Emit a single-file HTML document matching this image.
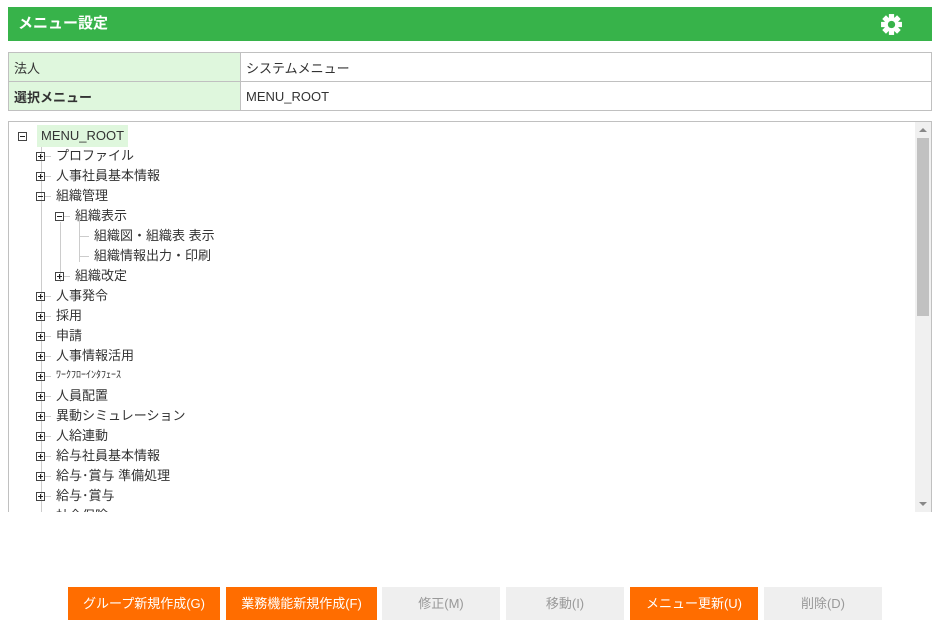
<!DOCTYPE html><html><head><meta charset="utf-8"><style>
body{margin:0;width:937px;height:630px;background:#fff;font-family:"Liberation Sans","Noto Sans CJK JP",sans-serif;position:relative;overflow:hidden;color:#333}
.hd{position:absolute;left:8px;top:7px;width:924px;height:34px;background:#37b34a;color:#fff;font-weight:bold;font-size:15px;line-height:34px}
.hd span{position:absolute;left:10px}
table{position:absolute;left:8px;top:52px;width:924px;border-collapse:collapse;font-size:13px}
td{border:1px solid #c0c0c0;height:28px;padding:0 5px}
td.l{background:#dff7dd;width:221px}
.tree{position:absolute;left:8px;top:121px;width:922px;height:390px;border:1px solid #c0c0c0;border-bottom:none;overflow:hidden;font-size:13px}
.sb{position:absolute;right:0;top:0;width:16px;height:390px;background:#f0f0f0}
.th{position:absolute;left:2px;top:16px;width:12px;height:178px;background:#c1c1c1}
.r{position:absolute;height:20px;line-height:20px;white-space:nowrap}
.bx{position:absolute;width:7px;height:7px;border:1px solid #444;top:6px;font-size:0}
.bx:before{content:"";position:absolute;left:1px;top:3px;width:5px;height:1px;background:#222}
.p:after{content:"";position:absolute;left:3px;top:1px;width:1px;height:5px;background:#222}
.vl{position:absolute;width:1px;background:#ccc}
.hl{position:absolute;height:1px;background:#ccc;top:10px}
.btn{position:absolute;top:587px;height:33px;line-height:33px;text-align:center;font-size:13px;color:#fff;background:#ff6d00}
.g{background:#efefef;color:#999}
</style></head><body>
<div class="hd"><span>メニュー設定</span>
<svg style="position:absolute;left:872px;top:6px" width="23" height="23" viewBox="0 0 22 22"><g fill="#fff"><circle cx="11" cy="11" r="7"/><rect x="8.5" y="1" width="5" height="20"/><rect x="1" y="8.5" width="20" height="5"/><rect x="8.5" y="1" width="5" height="20" transform="rotate(45 11 11)"/><rect x="8.5" y="1" width="5" height="20" transform="rotate(-45 11 11)"/></g><circle cx="11" cy="11" r="3.5" fill="#37b34a"/></svg></div>
<table><tr><td class="l">法人</td><td>システムメニュー</td></tr><tr><td class="l" style="font-weight:bold">選択メニュー</td><td>MENU_ROOT</td></tr></table>
<div class="tree">
<div class="vl" style="left:32px;top:20px;height:380px"></div>
<div class="vl" style="left:51px;top:100px;height:60px"></div>
<div class="vl" style="left:70px;top:100px;height:40px"></div>
<div class="r" style="left:9px;top:4px"><span class="bx" style="left:0"></span><span style="position:absolute;left:19px;top:-1px;background:#dff7dd;padding:0 4px;height:22px;line-height:22px;color:#333">MENU_ROOT</span></div>
<div id="items"></div>
<div class="sb"><div class="th"></div><div style="position:absolute;left:4px;top:6px;border:4px solid transparent;border-bottom-color:#888;border-top:none"></div><div style="position:absolute;left:4px;bottom:6px;border:4px solid transparent;border-top-color:#888;border-bottom:none"></div></div>
</div>
<script>
var it=[[1,'p','プロファイル'],[1,'p','人事社員基本情報'],[1,'m','組織管理'],[2,'m','組織表示'],[3,'','組織図・組織表 表示'],[3,'','組織情報出力・印刷'],[2,'p','組織改定'],[1,'p','人事発令'],[1,'p','採用'],[1,'p','申請'],[1,'p','人事情報活用'],[1,'p','ﾜｰｸﾌﾛｰｲﾝﾀﾌｪｰｽ'],[1,'p','人員配置'],[1,'p','異動シミュレーション'],[1,'p','人給連動'],[1,'p','給与社員基本情報'],[1,'p','給与･賞与 準備処理'],[1,'p','給与･賞与'],[1,'p','社会保険']];
var h='';it.forEach(function(a,i){var t=24+i*20,x=9+a[0]*19;
if(a[1]){h+='<div class="r" style="left:'+(x-1)+'px;top:'+t+'px"><span class="bx '+(a[1]=='p'?'p':'')+'" style="left:0"></span><span class="hl" style="left:9px;width:6px"></span><span style="position:absolute;left:20px;'+(a[2].indexOf('ﾜ')==0?'font-size:10px':'')+'">'+a[2]+'</span></div>';}
else{h+='<div class="r" style="left:70px;top:'+t+'px"><span class="vl" style="left:0;top:-10px;height:20px"></span><span class="hl" style="left:0;width:10px"></span><span style="position:absolute;left:15px">'+a[2]+'</span></div>';}
});document.getElementById('items').innerHTML=h;
</script>
<div class="btn" style="left:68px;width:152px">グループ新規作成(G)</div>
<div class="btn" style="left:226px;width:151px">業務機能新規作成(F)</div>
<div class="btn g" style="left:382px;width:118px">修正(M)</div>
<div class="btn g" style="left:506px;width:118px">移動(I)</div>
<div class="btn" style="left:630px;width:128px">メニュー更新(U)</div>
<div class="btn g" style="left:764px;width:118px">削除(D)</div>
</body></html>
